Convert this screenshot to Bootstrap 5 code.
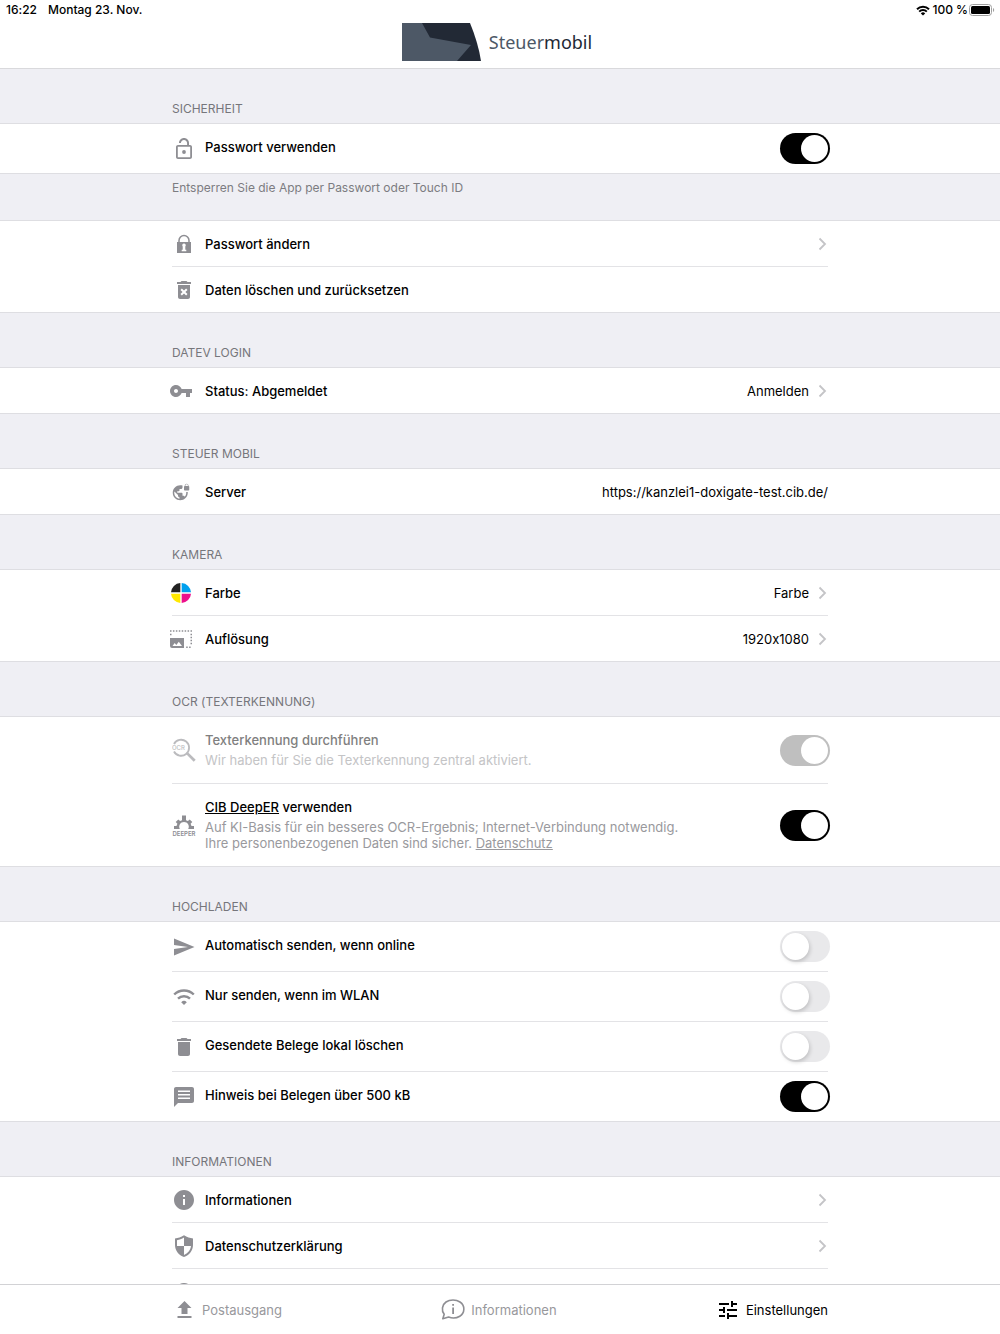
<!DOCTYPE html>
<html lang="de">
<head>
<meta charset="utf-8">
<meta name="viewport" content="width=device-width, initial-scale=1">
<title>Steuermobil – Einstellungen</title>
<link rel="stylesheet" href="https://cdn.jsdelivr.net/npm/bootstrap@5.3.0/dist/css/bootstrap.min.css">
<style>
  body { font-family: Inter, "Liberation Sans", sans-serif; font-size: 13px; line-height: 16px; font-variant-ligatures: no-contextual; color: #000; background: #efeff4; }
  a { color: inherit; }
  svg { display: block; flex-shrink: 0; }
  .app-col { width: 100%; max-width: 656px; margin-left: auto; margin-right: auto; }
  .app-header { border-bottom: 1px solid #d9d9dc; }
  .status-bar { height: 20px; font-size: 12px; font-weight: 500; padding: 0 5px 0 6px; }
  .status-date { margin-left: 11px; }
  .status-wifi { margin-right: 2px; }
  .status-battery { margin-left: 1px; }
  .brand-bar { height: 48px; padding: 0 6px 4px 0; }
  .brand-name { font-family: "Noto Sans", sans-serif; font-size: 18px; line-height: 24px; color: #4d5866; }
  .brand-name span { color: #222935; }
  .group-title { font-size: 12px; font-weight: 400; line-height: 16px; color: #76767b; padding: 32px 0 6px; margin-bottom: 0; }
  .group-note { font-size: 12px; color: #7c7c81; padding: 6px 0 24px; margin-bottom: 0; }
  .group-list { background: #fff; border-top: 1px solid #dedee2; border-bottom: 1px solid #dedee2; }
  .entry { min-height: 45px; color: #000; text-decoration: none; text-align: left; }
  .entry-sw { min-height: 49px; }
  .entry-sw > .entry-title { padding-bottom: 3px; }
  .entry-ocr { min-height: 66px; }
  .entry-deep { min-height: 82px; }
  .entry + .entry { border-top: 1px solid #e3e3e6; box-sizing: content-box; }
  .entry-title { font-weight: 500; }
  .entry-icon { width: 24px; height: 24px; fill: #8e8e93; margin-right: 9px; }
  .shift-left .entry-icon { margin-left: -3px; margin-right: 12px; }
  .entry-sub { color: #99999d; line-height: 16px; }
  .entry-off .entry-title { color: #808080; }
  .entry-off .entry-sub { color: #c4c4c6; }
  .entry-off .entry-icon { opacity: .6; }
  .chev { fill: none; stroke: #c4c4c7; stroke-width: 1.8; margin-left: 9px; }
  .ios-switch.form-check-input { width: 50px; height: 31px; margin: 0 -2px 0 0; border: 0; border-radius: 16px; background: #e9e9eb; padding: 2px; flex-shrink: 0; opacity: 1; }
  .ios-switch::before { content: ""; display: block; width: 27px; height: 27px; border-radius: 50%; background: #fff; box-shadow: 1px 2px 4px rgba(0,0,0,.18); }
  .ios-switch.form-check-input:checked { background: #000; padding-left: 21px; }
  .ios-switch.form-check-input:disabled { background: #bfbfbf; opacity: 1; }
  .ios-switch:checked::before { box-shadow: none; }
  .tab-bar { border-top: 1px solid #d2d2d5; height: 50px; }
  .tab-item { color: #98989c; fill: #8e8e93; text-decoration: none; gap: 6px; padding-top: 1px; }
  .tab-item.active { color: #000; fill: #000; }
</style>
<script src="https://cdn.jsdelivr.net/npm/bootstrap@5.3.0/dist/js/bootstrap.bundle.min.js"></script>
</head>
<body class="vh-100 d-flex flex-column overflow-hidden">

<header class="app-header bg-white flex-shrink-0">
  <div class="status-bar d-flex align-items-center">
    <span>16:22</span><span class="status-date">Montag 23. Nov.</span>
    <svg class="status-wifi ms-auto" width="14" height="11" viewBox="0 0 14 11" fill="none" stroke="#000" stroke-width="2" aria-hidden="true"><path d="M1 4.2a8.6 8.6 0 0 1 12 0M3.2 6.6a5.4 5.4 0 0 1 7.6 0"/><path d="M7 10.6L4.8 8.4a3.2 3.2 0 0 1 4.4 0z" fill="#000" stroke="none"/></svg>
    <span>100 %</span>
    <svg class="status-battery" width="26" height="12" viewBox="0 0 26 12" aria-hidden="true"><rect x=".5" y=".5" width="22" height="11" rx="3" fill="none" stroke="#a0a0a0"/><rect x="2" y="2" width="19" height="8" rx="1.5"/><path d="M24 4v4c1.6-.6 1.6-3.4 0-4z" fill="#a0a0a0"/></svg>
  </div>
  <div class="brand-bar d-flex align-items-center justify-content-center gap-2">
    <svg width="79" height="38" viewBox="0 0 79 38" aria-hidden="true"><path d="M0 0H68C73 12 77 25 79 38H0z" fill="#222935"/><path d="M0 0H20L28 14.5 69 22 55 38H0z" fill="#4d5866"/></svg>
    <div class="brand-name">Steuer<span>mobil</span></div>
  </div>
</header>

<main class="flex-grow-1 overflow-hidden">
  <section>
    <h2 class="group-title app-col">SICHERHEIT</h2>
    <div class="group-list"><div class="app-col">
      <div class="entry entry-sw d-flex align-items-center">
        <svg class="entry-icon" viewBox="0 0 24 24"><circle cx="12" cy="15" r="1.9"/><path d="M18 8h-1V6c0-2.76-2.24-5-5-5S7 3.240 7 6h1.900c0-1.710 1.390-3.100 3.100-3.100 1.710 0 3.100 1.390 3.100 3.100v2H6c-1.100 0-2 .9-2 2v10c0 1.100.9 2 2 2h12c1.100 0 2-.9 2-2V10c0-1.100-.9-2-2-2zm.2 12.200H5.800V9.800h12.400z"/></svg>
        <label class="entry-title flex-grow-1" for="sw-pass">Passwort verwenden</label>
        <input class="form-check-input ios-switch" type="checkbox" role="switch" id="sw-pass" checked>
      </div>
    </div></div>
    <p class="group-note app-col">Entsperren Sie die App per Passwort oder Touch ID</p>
    <div class="group-list"><div class="app-col">
      <a class="entry d-flex align-items-center" href="#passwort">
        <svg class="entry-icon" viewBox="0 0 24 24"><path d="M7 11V8.500a5 5 0 0 1 10 0V11" fill="none" stroke="#8e8e93" stroke-width="1.500"/><path fill-rule="evenodd" d="M5 10h14v11H5zM12 11.500a1.800 1.800 0 0 0-1.300 3v3.300h-1v1.400h4.600v-1.400h-1v-3.300A1.800 1.800 0 0 0 12 11.500z"/></svg>
        <span class="entry-title flex-grow-1">Passwort ändern</span>
        <svg class="chev" width="10" height="14" viewBox="0 0 10 14"><path d="M1.500 1.500 7 7l-5.500 5.500"/></svg>
      </a>
      <button type="button" class="entry d-flex align-items-center w-100 bg-transparent border-start-0 border-end-0 border-bottom-0 p-0">
        <svg class="entry-icon" viewBox="0 0 24 24"><path d="M6 19c0 1.100.9 2 2 2h8c1.100 0 2-.9 2-2V7H6v12zm2.460-7.120l1.410-1.410L12 12.590l2.120-2.120 1.410 1.410L13.410 14l2.120 2.120-1.410 1.410L12 15.410l-2.120 2.120-1.410-1.410L10.590 14l-2.130-2.120zM15.500 4l-1-1h-5l-1 1H5v2h14V4z"/></svg>
        <span class="entry-title">Daten löschen und zurücksetzen</span>
      </button>
    </div></div>
  </section>

  <section>
    <h2 class="group-title app-col">DATEV LOGIN</h2>
    <div class="group-list"><div class="app-col shift-left">
      <a class="entry d-flex align-items-center" href="#login">
        <svg class="entry-icon" viewBox="0 0 24 24"><path d="M12.650 10C11.830 7.670 9.610 6 7 6c-3.310 0-6 2.690-6 6s2.690 6 6 6c2.610 0 4.830-1.670 5.650-4H17v4h4v-4h2v-4H12.650zM7 14c-1.100 0-2-.9-2-2s.9-2 2-2 2 .9 2 2-.9 2-2 2z"/></svg>
        <span class="entry-title flex-grow-1">Status: Abgemeldet</span><span>Anmelden</span>
        <svg class="chev" width="10" height="14" viewBox="0 0 10 14"><path d="M1.500 1.500 7 7l-5.500 5.500"/></svg>
      </a>
    </div></div>
  </section>

  <section>
    <h2 class="group-title app-col">STEUER MOBIL</h2>
    <div class="group-list"><div class="app-col shift-left">
      <div class="entry d-flex align-items-center">
        <svg class="entry-icon" viewBox="-4 -4 32 32"><path d="M22 4v-.5C22 2.120 20.880 1 19.500 1S17 2.120 17 3.500V4c-.55 0-1 .45-1 1v4c0 .55.45 1 1 1h5c.55 0 1-.45 1-1V5c0-.55-.45-1-1-1zm-.8 0h-3.400v-.5c0-.94.76-1.700 1.700-1.700s1.700.76 1.700 1.700V4zm-2.280 8c.04.33.08.66.08 1 0 2.080-.8 3.970-2.100 5.390-.26-.81-1-1.390-1.900-1.390h-1v-3c0-.55-.45-1-1-1H7v-2h2c.55 0 1-.45 1-1V8h2c1.100 0 2-.9 2-2V3.460c-.95-.3-1.950-.46-3-.46C5.480 3 1 7.480 1 13s4.480 10 10 10 10-4.480 10-10c0-.34-.02-.67-.05-1h-2.030zM10 20.930c-3.950-.49-7-3.850-7-7.930 0-.62.08-1.210.21-1.790L8 16v1c0 1.100.9 2 2 2v1.930z"/></svg>
        <span class="entry-title flex-grow-1">Server</span><span>https://kanzlei1-doxigate-test.cib.de/</span>
      </div>
    </div></div>
  </section>

  <section>
    <h2 class="group-title app-col">KAMERA</h2>
    <div class="group-list"><div class="app-col shift-left">
      <a class="entry d-flex align-items-center" href="#farbe">
        <svg class="entry-icon" viewBox="0 0 24 24"><path d="M11.300 11.300H2A10 10 0 0 1 11.300 2z" fill="#222"/><path d="M12.700 11.300H22A10 10 0 0 0 12.700 2z" fill="#00a0ee"/><path d="M11.300 12.700H2A10 10 0 0 0 11.300 22z" fill="#ffe800"/><path d="M12.700 12.700H22A10 10 0 0 1 12.700 22z" fill="#ec0f8c"/></svg>
        <span class="entry-title flex-grow-1">Farbe</span><span>Farbe</span>
        <svg class="chev" width="10" height="14" viewBox="0 0 10 14"><path d="M1.500 1.500 7 7l-5.500 5.500"/></svg>
      </a>
      <a class="entry d-flex align-items-center" href="#aufloesung">
        <svg class="entry-icon" viewBox="0 0 24 24"><path d="M1 11h14v10H3a2 2 0 0 1-2-2zM3.500 19h9.500l-3.200-4.300-2.500 3.200-1.600-1.900z" fill-rule="evenodd"/><path d="M1 4h22M1 7.500h1.500M21.500 7.500H23M21.500 10.500H23M21.500 13.500H23M21.500 16.500H23M17.200 20.200H23" fill="none" stroke="#8e8e93" stroke-width="1.600" stroke-dasharray="1.500 1.430"/></svg>
        <span class="entry-title flex-grow-1">Auflösung</span><span>1920x1080</span>
        <svg class="chev" width="10" height="14" viewBox="0 0 10 14"><path d="M1.500 1.500 7 7l-5.500 5.500"/></svg>
      </a>
    </div></div>
  </section>

  <section>
    <h2 class="group-title app-col">OCR (TEXTERKENNUNG)</h2>
    <div class="group-list"><div class="app-col">
      <div class="entry entry-ocr entry-off d-flex align-items-center">
        <svg class="entry-icon" viewBox="0 0 24 24"><path d="M2 6A8 8 0 1 1 2 13.500" fill="none" stroke="#8e8e93" stroke-width="1.800"/><path d="M14.300 16.300l1.900-1.900 7.500 7.300-2 2z"/><text x="0" y="12" font-size="6" font-weight="500">OCR</text></svg>
        <div class="flex-grow-1">
          <label class="entry-title d-block" for="sw-ocr">Texterkennung durchführen</label>
          <div class="entry-sub mt-1">Wir haben für Sie die Texterkennung zentral aktiviert.</div>
        </div>
        <input class="form-check-input ios-switch" type="checkbox" role="switch" id="sw-ocr" checked disabled>
      </div>
      <div class="entry entry-deep d-flex align-items-center">
        <svg class="entry-icon" viewBox="0 0 24 24"><path d="M2 16v-3h2.500l.9-2.200L3.700 9 6.300 6.400l1.800 1.600L10 7.200V2.500h4v4.700l1.900.8 1.800-1.600L20.300 9l-1.700 1.800.9 2.200H22v3h-5.800a4.800 4.800 0 1 0-8.400 0z"/><text x="12" y="22.500" font-size="6" font-weight="600" text-anchor="middle">DEEPER</text></svg>
        <div class="flex-grow-1">
          <label class="entry-title d-block" for="sw-deep"><a href="#deeper">CIB DeepER</a> verwenden</label>
          <div class="entry-sub mt-1">Auf KI-Basis für ein besseres OCR-Ergebnis; Internet-Verbindung notwendig.<br>Ihre personenbezogenen Daten sind sicher. <a href="#datenschutz">Datenschutz</a></div>
        </div>
        <input class="form-check-input ios-switch" type="checkbox" role="switch" id="sw-deep" checked>
      </div>
    </div></div>
  </section>

  <section>
    <h2 class="group-title app-col">HOCHLADEN</h2>
    <div class="group-list"><div class="app-col">
      <div class="entry entry-sw d-flex align-items-center">
        <svg class="entry-icon" viewBox="0 0 24 24"><path d="M2 20.500L22.500 12 2 3.500V10l14 2-14 2z"/></svg>
        <label class="entry-title flex-grow-1" for="sw-auto">Automatisch senden, wenn online</label>
        <input class="form-check-input ios-switch" type="checkbox" role="switch" id="sw-auto">
      </div>
      <div class="entry entry-sw d-flex align-items-center">
        <svg class="entry-icon" viewBox="0 0 24 24"><path d="M2.200 9.500a14 14 0 0 1 19.600 0M6 13.700a8.500 8.500 0 0 1 12 0" fill="none" stroke="#8e8e93" stroke-width="2.400"/><path d="M12 20l-2.800-2.800a4 4 0 0 1 5.600 0z"/></svg>
        <label class="entry-title flex-grow-1" for="sw-wlan">Nur senden, wenn im WLAN</label>
        <input class="form-check-input ios-switch" type="checkbox" role="switch" id="sw-wlan">
      </div>
      <div class="entry entry-sw d-flex align-items-center">
        <svg class="entry-icon" viewBox="0 0 24 24"><path d="M6 19c0 1.100.9 2 2 2h8c1.100 0 2-.9 2-2V7H6v12zM19 4h-3.500l-1-1h-5l-1 1H5v2h14V4z"/></svg>
        <label class="entry-title flex-grow-1" for="sw-del">Gesendete Belege lokal löschen</label>
        <input class="form-check-input ios-switch" type="checkbox" role="switch" id="sw-del">
      </div>
      <div class="entry entry-sw d-flex align-items-center">
        <svg class="entry-icon" viewBox="0 0 24 24"><path fill-rule="evenodd" d="M20 2H4c-1.100 0-2 .9-2 2v18l4-4h14c1.100 0 2-.9 2-2V4c0-1.100-.9-2-2-2zM6 5.500h12v1.600H6zM6 9h12v1.600H6zM6 12.500h12v1.600H6z"/></svg>
        <label class="entry-title flex-grow-1" for="sw-size">Hinweis bei Belegen über 500 kB</label>
        <input class="form-check-input ios-switch" type="checkbox" role="switch" id="sw-size" checked>
      </div>
    </div></div>
  </section>

  <section>
    <h2 class="group-title app-col">INFORMATIONEN</h2>
    <div class="group-list"><div class="app-col">
      <a class="entry d-flex align-items-center" href="#info">
        <svg class="entry-icon" viewBox="0 0 24 24"><path d="M12 2C6.480 2 2 6.480 2 12s4.480 10 10 10 10-4.480 10-10S17.520 2 12 2zm1 15h-2v-6h2v6zm0-8h-2V7h2v2z"/></svg>
        <span class="entry-title flex-grow-1">Informationen</span>
        <svg class="chev" width="10" height="14" viewBox="0 0 10 14"><path d="M1.500 1.500 7 7l-5.500 5.500"/></svg>
      </a>
      <a class="entry d-flex align-items-center" href="#datenschutzerklaerung">
        <svg class="entry-icon" viewBox="0 0 24 24"><path d="M12 1.300C9 3.300 6 4 3 4.500V11c0 5.800 3.800 10.200 9 12 5.200-1.800 9-6.200 9-12V4.500c-3-.5-6-1.200-9-3.200zM12 12h7c-.5 4-3.300 7.500-7 8.900V12H5V6.200c2.400-.4 4.800-1.100 7-2.600z"/></svg>
        <span class="entry-title flex-grow-1">Datenschutzerklärung</span>
        <svg class="chev" width="10" height="14" viewBox="0 0 10 14"><path d="M1.500 1.500 7 7l-5.500 5.500"/></svg>
      </a>
      <div class="entry d-flex align-items-center">
        <svg class="entry-icon" viewBox="0 0 24 24"><circle cx="12" cy="12" r="9"/></svg>
      </div>
    </div></div>
  </section>
</main>

<nav class="tab-bar bg-white flex-shrink-0">
  <div class="app-col h-100 d-flex justify-content-between align-items-center">
    <a class="tab-item d-flex align-items-center" href="#postausgang">
      <svg width="24" height="24" viewBox="0 0 24 24"><path d="M9.500 16h6v-6h4L12.500 3l-7 7h4zM5.500 18h14v2h-14z"/></svg>Postausgang</a>
    <a class="tab-item d-flex align-items-center" href="#informationen">
      <svg width="24" height="24" viewBox="0 0 24 24"><path d="M3.200 16.300C.2 12.500 1 6.800 5 4c4-2.700 10-2.700 14 0 5.300 3.600 5 11-.2 14.200-3.600 2.200-7.600 2.300-11.200.8L1.800 20.800z" fill="none" stroke="#8e8e93" stroke-width="1.600" stroke-linejoin="round"/><path d="M11.200 9.500h1.800v6.500h-1.800zM11.200 5.900h1.800v1.900h-1.800z"/></svg>Informationen</a>
    <a class="tab-item active d-flex align-items-center" href="#einstellungen" aria-current="page">
      <svg width="24" height="24" viewBox="0 0 24 24"><path d="M3 17v2h6v-2H3zM3 5v2h10V5H3zm10 16v-2h8v-2h-8v-2h-2v6h2zM7 9v2H3v2h4v2h2V9H7zm14 4v-2H11v2h10zm-6-4h2V7h4V5h-4V3h-2v6z"/></svg>Einstellungen</a>
  </div>
</nav>
</body>
</html>
